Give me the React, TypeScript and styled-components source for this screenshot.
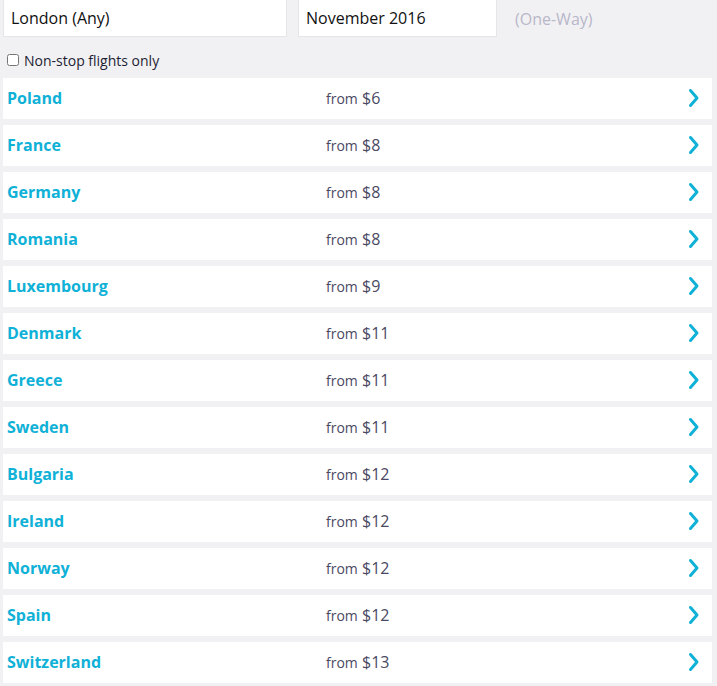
import React from 'react'
import styled, { createGlobalStyle } from 'styled-components'

const destinations = [
  { name: 'Poland', price: 6 },
  { name: 'France', price: 8 },
  { name: 'Germany', price: 8 },
  { name: 'Romania', price: 8 },
  { name: 'Luxembourg', price: 9 },
  { name: 'Denmark', price: 11 },
  { name: 'Greece', price: 11 },
  { name: 'Sweden', price: 11 },
  { name: 'Bulgaria', price: 12 },
  { name: 'Ireland', price: 12 },
  { name: 'Norway', price: 12 },
  { name: 'Spain', price: 12 },
  { name: 'Switzerland', price: 13 },
]

export default function App() {
  return (
    <Page>
      <GlobalStyle />

      <SearchBar>
        <Field width={284}>London (Any)</Field>
        <Field width={199}>November 2016</Field>
        <TripType>(One-Way)</TripType>
      </SearchBar>

      <Filter>
        <Checkbox type="checkbox" />
        Non-stop flights only
      </Filter>

      <List>
        {destinations.map(d => (
          <Row key={d.name}>
            <Country>{d.name}</Country>
            <Price>
              <From>from</From> ${d.price}
            </Price>
            <Chevron />
          </Row>
        ))}
      </List>
    </Page>
  )
}

const GlobalStyle = createGlobalStyle`
  html, body {
    margin: 0;
    background: #f1f1f4;
    font-family: 'Open Sans', 'DejaVu Sans', sans-serif;
  }
`

const Page = styled.div`
  width: 717px;
  height: 686px;
  overflow: hidden;
  padding: 0 5px 0 3px;
  box-sizing: border-box;
`

const SearchBar = styled.div`
  display: flex;
  align-items: center;
  gap: 11px;
  height: 37px;
`

const Field = styled.div<{ width: number }>`
  width: ${p => p.width}px;
  height: 37px;
  box-sizing: border-box;
  background: #fff;
  border: 1px solid #e6e6ea;
  border-top: none;
  padding: 0 0 0 7px;
  display: flex;
  align-items: center;
  font-size: 16px;
  color: #111;
`

const TripType = styled.div`
  margin-left: 7px;
  font-size: 16px;
  color: #b9b7c9;
`

const Filter = styled.label`
  display: flex;
  align-items: center;
  gap: 5px;
  height: 36px;
  margin-top: 5px;
  padding-left: 4px;
  font-size: 14px;
  color: #1e1d33;
`

const Checkbox = styled.input`
  width: 12px;
  height: 12px;
  margin: 0;
`

const List = styled.div`
  display: flex;
  flex-direction: column;
  gap: 6px;
`

const Row = styled.div`
  display: grid;
  grid-template-columns: 319px 1fr 24px;
  align-items: center;
  height: 41px;
  box-sizing: border-box;
  padding: 0 0 2px 4px;
  background: #fff;
`

const Country = styled.div`
  font-size: 16px;
  font-weight: 700;
  color: #0fb1d7;
`

const Price = styled.div`
  font-size: 16px;
  color: #4a4963;
`

const From = styled.span`
  font-size: 14px;
`

function Chevron() {
  return (
    <ChevronSvg viewBox="0 0 12 20" width="12" height="20">
      <path
        d="M2.5 2.5 L9 10 L2.5 17.5"
        fill="none"
        stroke="#0fb1d7"
        strokeWidth="3"
        strokeLinecap="round"
        strokeLinejoin="round"
      />
    </ChevronSvg>
  )
}

const ChevronSvg = styled.svg`
  display: block;
`
